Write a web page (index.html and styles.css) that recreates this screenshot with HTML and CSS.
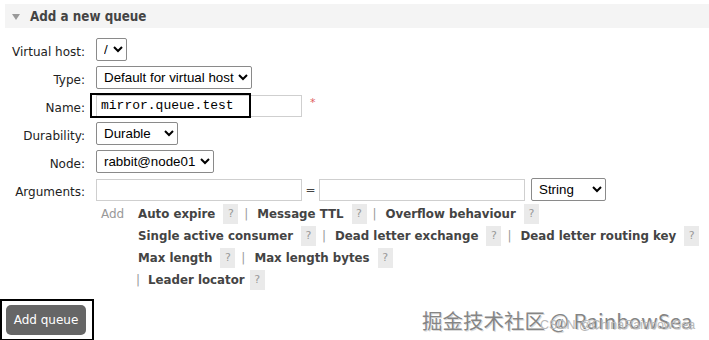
FILE: index.html
```html
<!DOCTYPE html>
<html>
<head>
<meta charset="utf-8">
<link rel="stylesheet" href="styles.css">
</head>
<body>
<div class="page">
  <div class="section-head"><span class="tri"></span><span class="head-text">Add a new queue</span></div>
  <div class="form">
    <label class="lbl">Virtual host:</label>
    <div class="field"><select class="sel sel-vhost"><option>/</option></select></div>

    <label class="lbl">Type:</label>
    <div class="field"><select class="sel sel-type"><option>Default for virtual host</option></select></div>

    <label class="lbl">Name:</label>
    <div class="field name-field">
      <span class="name-wrap"><input class="inp inp-name" type="text" value="mirror.queue.test"><span class="focus-box"></span></span>
      <span class="req">*</span>
    </div>

    <label class="lbl">Durability:</label>
    <div class="field"><select class="sel sel-dur"><option>Durable</option></select></div>

    <label class="lbl">Node:</label>
    <div class="field"><select class="sel sel-node"><option>rabbit@node01</option></select></div>

    <label class="lbl">Arguments:</label>
    <div class="field args">
      <input class="inp inp-arg" type="text">
      <span class="eq">=</span>
      <input class="inp inp-arg" type="text">
      <select class="sel sel-str"><option>String</option></select>
    </div>
  </div>

  <div class="adds">
    <span class="add-label">Add</span>
    <div class="links">
      <div class="line"><span class="al">Auto expire</span><span class="help">?</span><span class="pipe">|</span><span class="al">Message TTL</span><span class="help">?</span><span class="pipe">|</span><span class="al">Overflow behaviour</span><span class="help">?</span></div>
      <div class="line"><span class="al">Single active consumer</span><span class="help">?</span><span class="pipe">|</span><span class="al">Dead letter exchange</span><span class="help">?</span><span class="pipe">|</span><span class="al">Dead letter routing key</span><span class="help">?</span></div>
      <div class="line"><span class="al">Max length</span><span class="help">?</span><span class="pipe">|</span><span class="al">Max length bytes</span><span class="help">?</span></div>
      <div class="line line4"><span class="pipe pipe-lead">|</span><span class="al">Leader locator</span><span class="help help-tight">?</span></div>
    </div>
  </div>

  <div class="bottom">
    <div class="btn-box"><button class="btn">Add queue</button></div>
    <div class="watermark">
      <span class="wm-main">掘金技术社区 @ RainbowSea</span>
      <span class="wm-sub">CSDN @ChinaRainbowSea</span>
    </div>
  </div>
</div>
</body>
</html>
```
FILE: styles.css
```css
html, body {
  margin: 0;
  padding: 0;
  background: #fff;
}
body {
  font-family: "DejaVu Sans", Verdana, sans-serif;
  font-size: 12px;
  color: #222;
  width: 709px;
  height: 340px;
  overflow: hidden;
}
.page {
  display: flex;
  flex-direction: column;
  padding-top: 4px;
}
.section-head {
  margin-left: 5px;
  height: 24px;
  background: #f4f4f4;
  display: flex;
  align-items: center;
}
.tri {
  width: 0;
  height: 0;
  border-left: 4.5px solid transparent;
  border-right: 4.5px solid transparent;
  border-top: 6px solid #999;
  margin-left: 7px;
  margin-right: 10px;
  margin-top: 1px;
}
.head-text {
  font-family: "DejaVu Sans Condensed", "DejaVu Sans", sans-serif;
  font-weight: bold;
  font-size: 13.3px;
  color: #444;
}
.form {
  display: grid;
  grid-template-columns: 85px auto;
  column-gap: 11px;
  row-gap: 5px;
  margin-top: 10px;
  align-items: start;
}
.lbl {
  text-align: right;
  color: #222;
  font-size: 12px;
  line-height: 14px;
  padding-top: 7px;
}
.field {
  display: flex;
  align-items: center;
  height: 23px;
}
.sel {
  font-family: "Liberation Sans", Arial, sans-serif;
  font-size: 13.33px;
  height: 23px;
  border: 1px solid #8a8a8a;
  border-radius: 2px;
  background: #fff;
  color: #000;
  padding: 0 0 0 3px;
  margin: 0;
  box-sizing: border-box;
}
.sel-vhost { width: 31px; }
.sel-type { width: 156px; }
.sel-dur { width: 82px; }
.sel-node { width: 118px; }
.sel-str { width: 75px; margin-left: 6px; }
.inp {
  box-sizing: border-box;
  height: 22px;
  border: 1px solid #cfcfcf;
  padding: 0 4px;
  margin: 0;
  background: #fff;
}
.inp-name {
  width: 206px;
  font-family: "Liberation Mono", "Courier New", monospace;
  font-size: 13px;
  color: #000;
}
.name-wrap {
  position: relative;
  display: inline-block;
  height: 22px;
}
.focus-box {
  position: absolute;
  left: -6px;
  top: -2px;
  width: 157px;
  height: 21px;
  border: 2px solid #000;
  pointer-events: none;
}
.req {
  color: #e06060;
  font-size: 11px;
  margin-left: 8px;
  margin-top: -6px;
}
.inp-arg { width: 206px; }
.eq {
  width: 17px;
  text-align: center;
  color: #444;
}
.adds {
  display: flex;
  margin-top: 2px;
  margin-left: 101px;
}
.add-label {
  color: #999;
  width: 37px;
  line-height: 22px;
}
.links {
  display: flex;
  flex-direction: column;
}
.line {
  display: flex;
  align-items: center;
  height: 22px;
}
.al {
  font-weight: bold;
  color: #444;
  font-size: 11.8px;
}
.help {
  display: inline-block;
  width: 15px;
  height: 20px;
  line-height: 20px;
  text-align: center;
  background: #eaeaea;
  color: #999;
  font-size: 11px;
  margin-left: 8px;
}
.help-tight { margin-left: 5px; }
.pipe {
  color: #999;
  margin-left: 6px;
  margin-right: 9px;
}
.pipe-lead { margin-left: -2px; margin-right: 8px; }
.bottom {
  display: flex;
  margin-top: 8px;
  position: relative;
}
.btn-box {
  border: 2px solid #000;
  padding: 4px 6px 4px 4px;
  width: 80px;
  height: 30px;
}
.btn {
  width: 80px;
  height: 30px;
  border: none;
  border-radius: 5px;
  background: #666;
  color: #fff;
  font-family: "DejaVu Sans", Verdana, sans-serif;
  font-size: 12px;
  padding: 0;
}
.watermark {
  position: absolute;
  left: 422px;
  top: 2px;
  width: 290px;
  height: 40px;
}
.wm-main {
  position: absolute;
  left: 0;
  top: 4px;
  font-family: "Noto Sans CJK SC", "DejaVu Sans", sans-serif;
  font-size: 20.5px;
  color: #858585;
  white-space: nowrap;
  text-shadow: 0 0 1px #fff, 1px 1px 0 #d8d8d8;
}
.wm-sub {
  position: absolute;
  left: 118px;
  top: 17px;
  font-family: "Liberation Sans", Arial, sans-serif;
  font-size: 12.5px;
  color: #b8b8b8;
  white-space: nowrap;
}
```
